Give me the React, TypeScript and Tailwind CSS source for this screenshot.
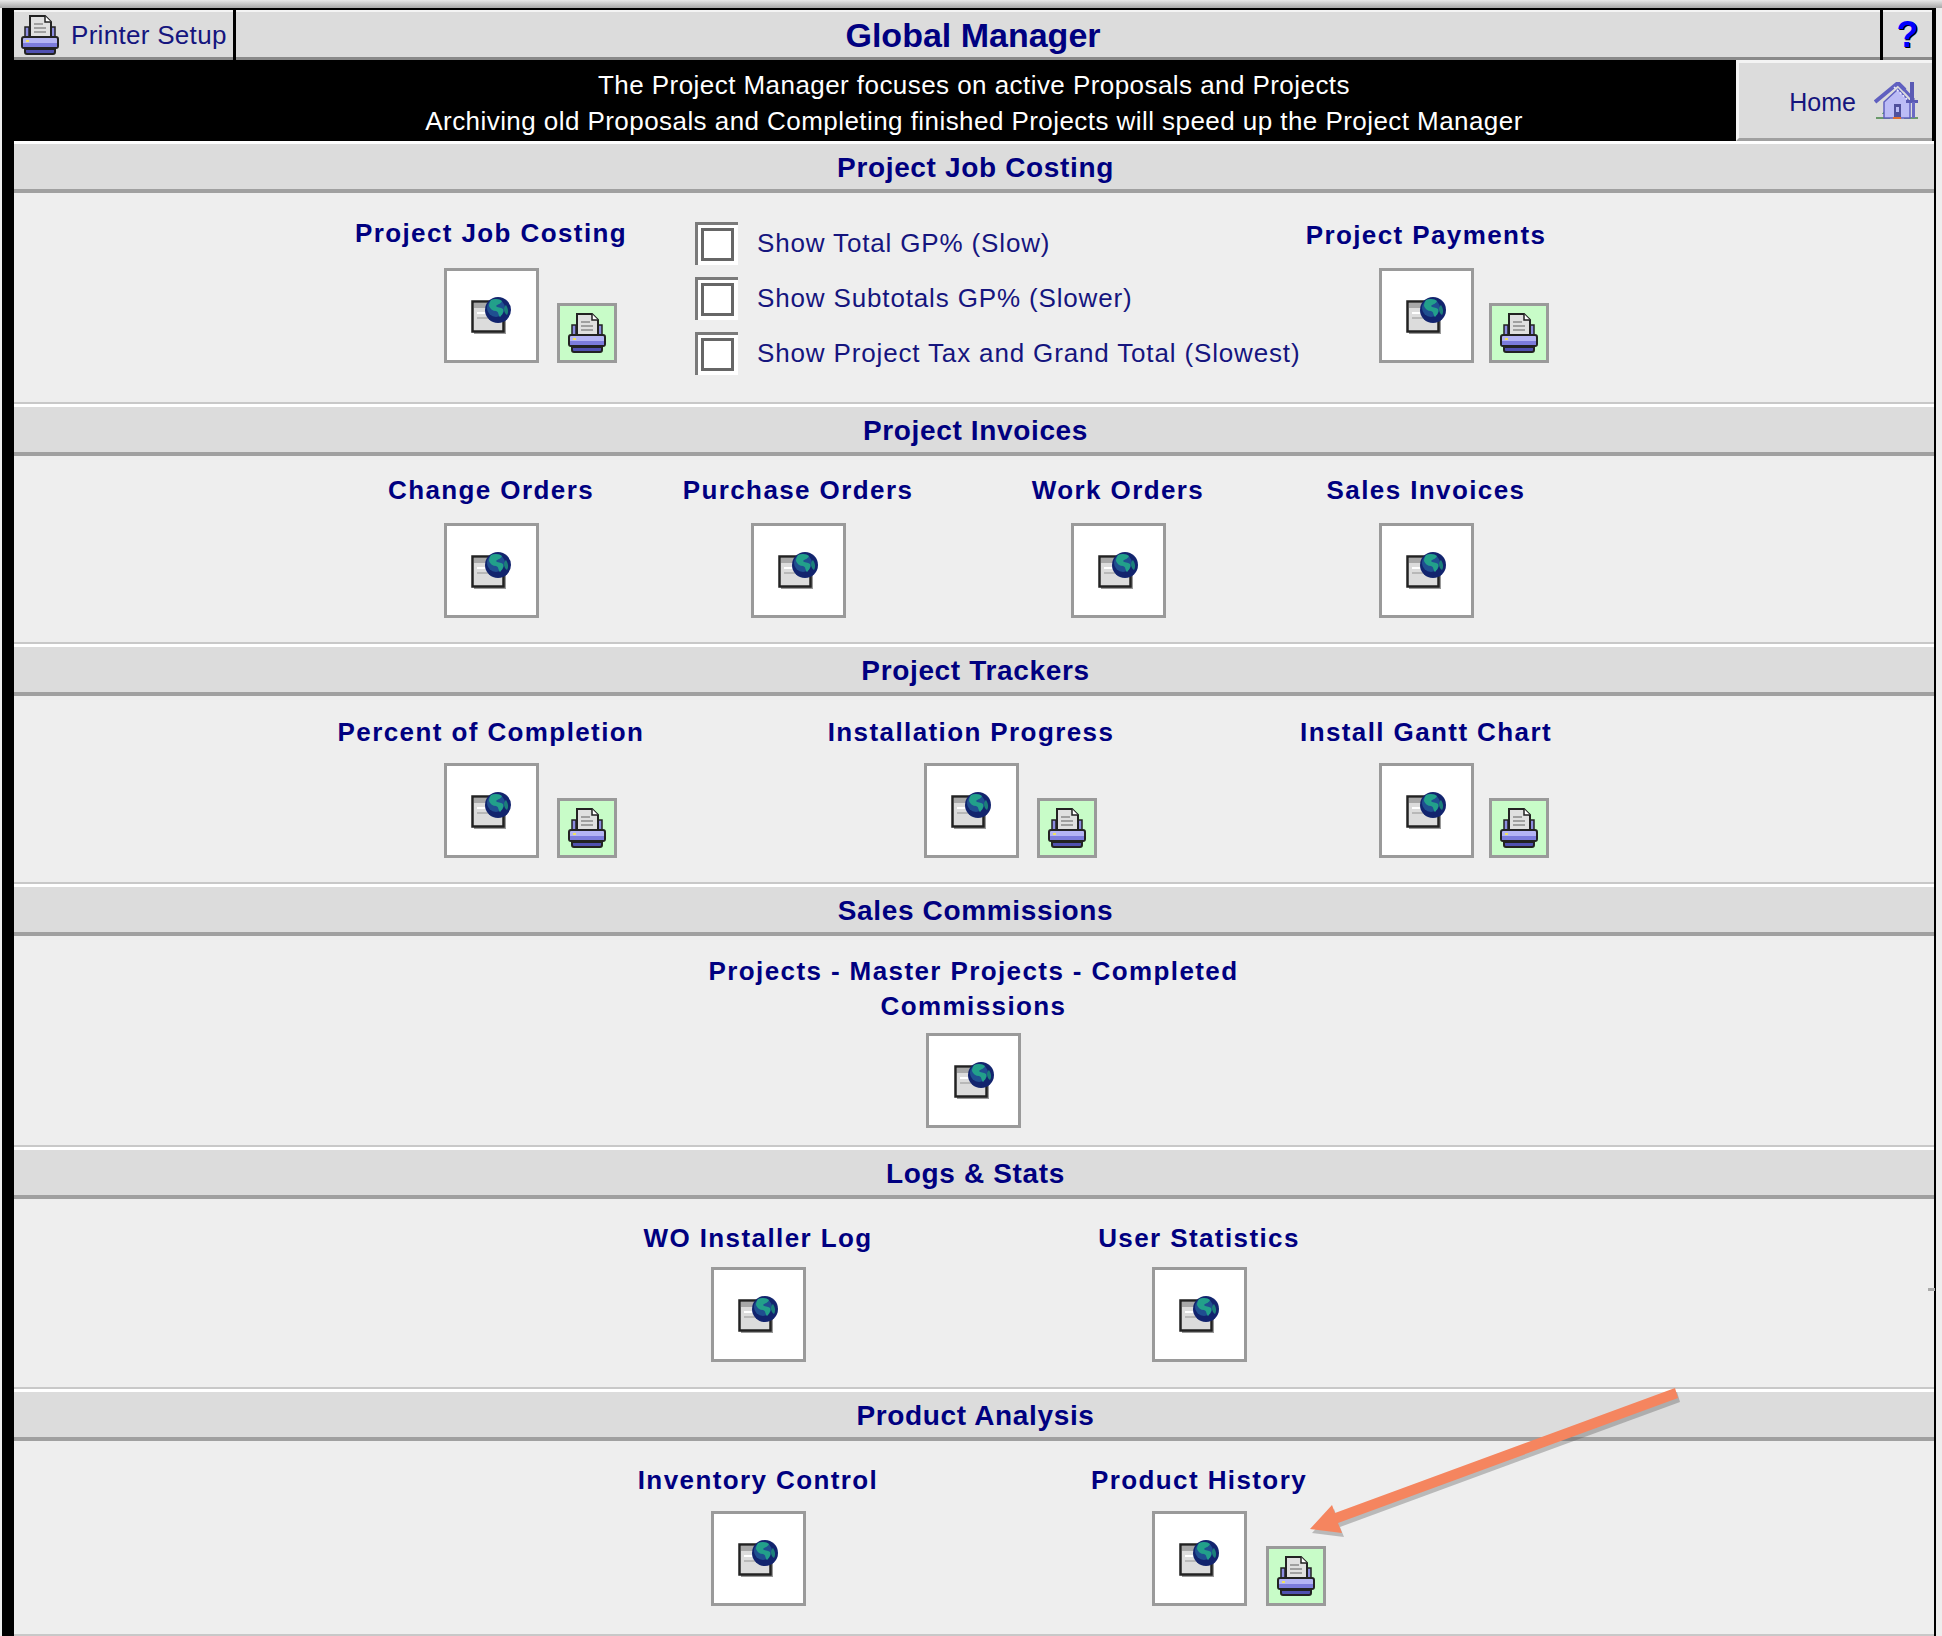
import type { ReactNode } from "react";

function GlobeIcon() {
  return (
    <svg width="42" height="38" viewBox="0 0 42 38">
      <rect x="3" y="7" width="32" height="30" fill="#9a9a9a" />
      <rect x="1.5" y="4.5" width="31" height="30" fill="#dcdcdc" stroke="#222" strokeWidth="2.5" />
      <rect x="3" y="6" width="27" height="5" fill="#a8a8a8" />
      <rect x="6" y="15" width="18" height="2" fill="#fff" />
      <rect x="6" y="20" width="18" height="2" fill="#b8b8b8" />
      <circle cx="27" cy="13" r="13" fill="#12246e" />
      <circle cx="25" cy="11" r="9" fill="#1f4f90" />
      <path d="M20 3c4-2 9-1 11 1-1 3-4 3-6 5 1 2 5 1 7 3 1 3-1 6-3 8-2-2-1-5-4-6-3 0-6-2-7-5 0-3 1-4 2-6z" fill="#22a08a" />
      <path d="M35 8c2 3 3 7 1 10-2-1-3-4-3-6s1-3 2-4z" fill="#1b7f7a" />
    </svg>
  );
}

function PrinterIcon() {
  return (
    <svg width="40" height="42" viewBox="0 0 40 42">
      <path d="M5 13h4v10H5zM31 13h4v10h-4z" fill="#8c8ce0" stroke="#222" strokeWidth="1.5" />
      <path d="M10 23V2h15l6 6v15z" fill="#e0e0e0" stroke="#222" strokeWidth="2" />
      <path d="M25 2v6h6" fill="#fff" stroke="#222" strokeWidth="1.5" />
      <path d="M14 10h9M14 14h12M14 18h12" stroke="#a0a0a0" strokeWidth="2" />
      <rect x="2" y="23" width="36" height="11" rx="2" fill="#b4b4f4" stroke="#222" strokeWidth="2" />
      <rect x="3" y="29" width="34" height="4" fill="#7c7cdc" />
      <rect x="6" y="26" width="3" height="2" fill="#f0e060" />
      <path d="M5 35h30v3a2 2 0 0 1-2 2H7a2 2 0 0 1-2-2z" fill="#5050b0" stroke="#222" strokeWidth="2" />
    </svg>
  );
}

function HomeIcon() {
  return (
    <svg width="46" height="38" viewBox="0 0 46 38">
      <path d="M2 36h14M30 36h14" stroke="#6a9a6a" strokeWidth="2" />
      <path d="M8 32l3-4 3 4z" fill="#3aa03a" />
      <path d="M10 20L24 7l12 13v16H10z" fill="#bcbcf6" stroke="#6060c0" strokeWidth="1.5" />
      <path d="M1 20L24 1l7 7" fill="none" stroke="#6060c0" strokeWidth="4" />
      <path d="M24 1l16 17" fill="none" stroke="#6060c0" strokeWidth="3" />
      <path d="M20 5l16 15" fill="none" stroke="#eaeaff" strokeWidth="1.5" strokeDasharray="2 2" />
      <path d="M36 0h4v20h-4z" fill="#5a5ab4" />
      <path d="M32 18h12v3H32z" fill="#5a5ab4" />
      <path d="M38 20h3v16h-3z" fill="#6a6ac4" />
      <rect x="20" y="22" width="7" height="14" fill="#50509c" />
      <rect x="22" y="25" width="3" height="5" fill="#bcbcf6" />
      <path d="M19 36h8" stroke="#e07030" strokeWidth="2" />
    </svg>
  );
}

function GlobeButton() {
  return (
    <button className="flex h-[95px] w-[95px] shrink-0 items-center justify-center border-[3px] border-[#9a9a9a] bg-white pt-[1px] pl-[2px]">
      <GlobeIcon />
    </button>
  );
}

function PrinterButton() {
  return (
    <button className="flex h-[60px] w-[60px] items-center justify-center border-[3px] border-[#9a9a9a] bg-[#c8fcc8]">
      <PrinterIcon />
    </button>
  );
}

// label, report button, and optionally the green print button hanging off to the right
function Cell({
  label,
  print,
  className,
  gap = "mt-[15px]",
  printGap = "pl-[18px]",
}: {
  label: ReactNode;
  print?: boolean;
  className: string;
  gap?: string;
  printGap?: string;
}) {
  return (
    <div className={`flex flex-col items-center ${className}`}>
      <div className="whitespace-nowrap text-center text-[26px] font-bold leading-[35px] tracking-[1.4px] text-[#000080]">{label}</div>
      <div className={`flex items-end ${gap}`}>
        <div className="w-[78px]" />
        <GlobeButton />
        <div className={`w-[78px] ${printGap}`}>{print && <PrinterButton />}</div>
      </div>
    </div>
  );
}

function Section({ title, body, children }: { title: string; body: string; children: ReactNode }) {
  return (
    <section>
      <h2 className="flex h-[52px] items-center justify-center border-t-[3px] border-b-[4px] border-t-white border-b-[#a0a0a0] bg-[#dcdcdc] pt-[3px] pl-[3px] text-[28px] font-bold tracking-[0.65px] text-[#000080]">
        {title}
      </h2>
      <div className={`flex border-b-2 border-[#c8c8c8] bg-[#eeeeee] ${body}`}>{children}</div>
    </section>
  );
}

function Check({ label }: { label: string }) {
  return (
    <label className="flex h-[55px] items-center">
      <span className="flex h-[43px] w-[43px] items-start border-t-[3px] border-l-[3px] border-[#7a7a7a] bg-white pt-[3px] pl-[3px]">
        <span className="h-[33px] w-[33px] border-[3px] border-[#666666] bg-white" />
      </span>
      <span className="ml-[19px] whitespace-nowrap text-[26px] tracking-[0.85px] text-[#15157e]">{label}</span>
    </label>
  );
}

export default function App() {
  return (
    <div className="relative h-[1636px] w-[1942px] overflow-hidden bg-[#eeeeee] font-['Liberation_Sans',Arial,sans-serif]">
      <div className="h-[8px] bg-gradient-to-b from-[#e8e8e8] to-[#a8a8a8]" />
      <div className="mr-[6px] ml-[2px] h-[1628px] border-t-[2px] border-r-[2px] border-l-[12px] border-[#000000] bg-[#000000]">
        {/* top bar */}
        <div className="flex h-[50px] gap-[3px]">
          <div className="flex w-[219px] items-center border-t-2 border-b-[3px] border-t-[#f4f4f4] border-b-[#8a8a8a] bg-[#dcdcdc] pl-[6px]">
            <PrinterIcon />
            <span className="ml-[11px] mt-[2px] text-[26px] tracking-[0.3px] text-[#15157e]">Printer Setup</span>
          </div>
          <div className="flex flex-1 items-center justify-center border-t-2 border-b-[3px] border-t-[#f4f4f4] border-b-[#8a8a8a] bg-[#dcdcdc] pt-[2px] pr-[170px] text-[34px] font-bold text-[#000080]">
            Global Manager
          </div>
          <div className="mr-[2px] flex w-[49px] items-center justify-center border-t-2 border-b-[3px] border-t-[#f4f4f4] border-b-[#8a8a8a] bg-[#dcdcdc] text-[36px] font-bold text-[#0000ff] [text-shadow:1px_1px_0_#000]">
            ?
          </div>
        </div>

        {/* notice row */}
        <div className="grid h-[81px] grid-cols-[198px_1fr_198px]">
          <div />
          <div className="flex flex-col items-center justify-center pt-[4px] text-[26px] leading-[36px] tracking-[0.44px] text-white">
            <div>The Project Manager focuses on active Proposals and Projects</div>
            <div className="whitespace-nowrap">Archiving old Proposals and Completing finished Projects will speed up the Project Manager</div>
          </div>
          <div className="mr-[2px] flex items-center justify-end border-t-[3px] border-b-[3px] border-l-[3px] border-t-[#f4f4f4] border-b-[#a0a0a0] border-l-[#f4f4f4] bg-[#dcdcdc] pr-[12px]">
            <span className="mt-[4px] mr-[18px] text-[25px] text-[#15157e]">Home</span>
            <HomeIcon />
          </div>
        </div>

        <Section title="Project Job Costing" body="h-[211px] pt-[23px]">
          <Cell label="Project Job Costing" print gap="mt-[17px]" className="ml-[297px] w-[360px]" />
          <div className="ml-[24px] w-[607px]">
            <Check label="Show Total GP% (Slow)" />
            <Check label="Show Subtotals GP% (Slower)" />
            <Check label="Show Project Tax and Grand Total (Slowest)" />
          </div>
          <Cell label="Project Payments" print printGap="pl-[15px]" className="ml-[-56px] w-[360px] pt-[2px]" />
        </Section>

        <Section title="Project Invoices" body="h-[188px] pt-[17px]">
          <Cell label="Change Orders" className="ml-[326px] w-[302px]" />
          <Cell label="Purchase Orders" className="w-[312px]" />
          <Cell label="Work Orders" className="w-[328px]" />
          <Cell label="Sales Invoices" className="w-[288px]" />
        </Section>

        <Section title="Project Trackers" body="h-[188px] pt-[19px]">
          <Cell label="Percent of Completion" print gap="mt-[13px]" className="ml-[297px] w-[360px]" />
          <Cell label="Installation Progress" print gap="mt-[13px]" className="ml-[120px] w-[360px]" />
          <Cell label="Install Gantt Chart" print printGap="pl-[15px]" gap="mt-[13px]" className="ml-[95px] w-[360px]" />
        </Section>

        <Section title="Sales Commissions" body="h-[211px] justify-center pt-[18px]">
          <Cell
            label={
              <>
                Projects - Master Projects - Completed
                <br />
                Commissions
              </>
            }
            gap="mt-[9px]"
            className="ml-[-1px] w-[800px]"
          />
        </Section>

        <Section title="Logs & Stats" body="h-[190px] pt-[22px]">
          <Cell label="WO Installer Log" gap="mt-[11px]" className="ml-[523px] w-[442px]" />
          <Cell label="User Statistics" gap="mt-[11px]" className="w-[440px]" />
        </Section>

        <Section title="Product Analysis" body="h-[195px] pt-[22px]">
          <Cell label="Inventory Control" gap="mt-[13px]" className="ml-[523px] w-[442px]" />
          <Cell label="Product History" print printGap="pl-[19px]" gap="mt-[13px]" className="w-[440px]" />
        </Section>
      </div>

      {/* annotation arrow */}
      <svg className="absolute top-0 left-0" width="1942" height="1636" viewBox="0 0 1942 1636">
        <rect x="1928" y="1288" width="7" height="3" fill="#aaaaaa" />
        <path d="M1675 1388L1678 1398L1338 1523L1342 1533L1310 1529L1332 1505L1335 1513Z" fill="#555555" opacity="0.35" transform="translate(2,4)" />
        <path d="M1675 1388L1678 1398L1338 1523L1342 1533L1310 1529L1332 1505L1335 1513Z" fill="#f5855f" />
      </svg>
    </div>
  );
}
